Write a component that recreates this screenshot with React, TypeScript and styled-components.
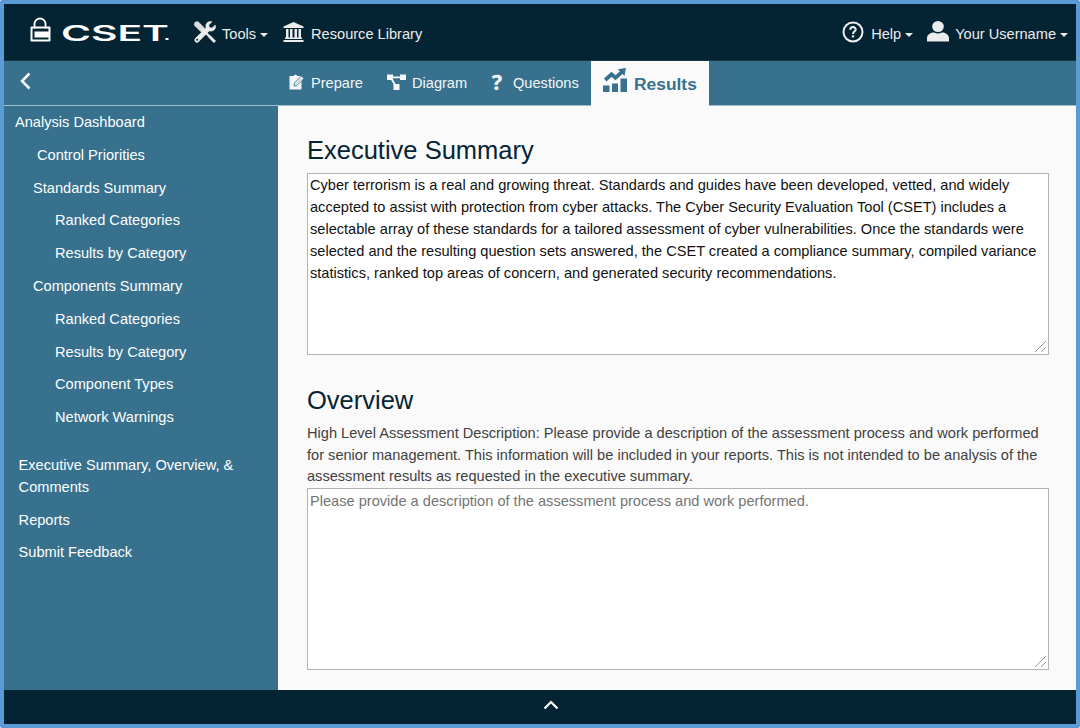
import React from 'react';
import styled, { createGlobalStyle } from 'styled-components';

const Global = createGlobalStyle`
  * { box-sizing: border-box; }
  body {
    margin: 0;
    background: #fff;
    font: 14.6px/21.93px "Liberation Sans", Arial, sans-serif;
    color: #414141;
  }
`;

const Frame = styled.div`
  display: flex;
  flex-direction: column;
  width: 1080px;
  height: 728px;
  border: 4px solid #5b9bd5;
  border-radius: 2px;
  background: #fafafa;
  overflow: hidden;
`;

const TopBar = styled.header`
  display: flex;
  align-items: center;
  height: 57px;
  flex: none;
  padding: 0 8px 0 26px;
  background: #042434;
  border-bottom: 1px solid #16384b;
  color: #ececec;
`;

const Logo = styled.svg`
  width: 146px;
  height: 36px;
  margin: -4px 18px 0 0;
`;

const MenuItem = styled.a<{ $gap: number; $after?: number }>`
  display: flex;
  align-items: center;
  white-space: nowrap;
  gap: ${p => p.$gap}px;
  margin-right: ${p => p.$after ?? 0}px;
  padding-top: 5px;
  svg { margin-top: -6px; flex: none; }
`;

const MenuLabel = styled.span`
  display: flex;
  align-items: center;
  gap: 4px;
`;

const Caret = styled.i`
  border: 4.5px solid transparent;
  border-top-color: currentColor;
  border-bottom: 0;
`;

const Spacer = styled.div`
  flex: 1;
`;

const NavBar = styled.nav`
  display: flex;
  height: 45px;
  flex: none;
  background: #37718e;
  border-bottom: 1px solid #9fbfcf;
  color: #f4f7f9;
`;

const BackButton = styled.div`
  width: 275px;
  padding: 11px 0 0 15px;
`;

const Tab = styled.a<{ $width: number; $active?: boolean }>`
  display: flex;
  align-items: center;
  width: ${p => p.$width}px;
  height: ${p => (p.$active ? 45 : 44)}px;
  padding: ${p => (p.$active ? '2px 0 0 12px' : '1px 0 0 10px')};
  gap: 6px;
  background: ${p => (p.$active ? '#fafafa' : 'transparent')};
  color: ${p => (p.$active ? '#37718e' : 'inherit')};
  font-size: ${p => (p.$active ? '17.4px' : 'inherit')};
  font-weight: ${p => (p.$active ? 700 : 400)};
  svg { flex: none; margin-top: ${p => (p.$active ? -8 : -3)}px; }
`;

const QuestionMark = styled.b`
  width: 15px;
  margin: -4px 0 0 -1px;
  font: bold 21px/20px "Open Sans", sans-serif;
  -webkit-text-stroke: .4px currentColor;
`;

const Body = styled.div`
  display: flex;
  flex: 1;
  min-height: 0;
`;

const Sidebar = styled.aside`
  width: 274px;
  flex: none;
  padding-top: .7px;
  background: #37718e;
  color: #fff;
`;

const SideLink = styled.a<{ $indent: number; $apart?: boolean }>`
  display: block;
  padding: 5.43px 40px 5.43px ${p => p.$indent}px;
  margin-top: ${p => (p.$apart ? 14.9 : 0)}px;
`;

const Content = styled.main`
  flex: 1;
  padding: 29px 27px 0 29px;
`;

const Heading = styled.h3<{ $gap: number }>`
  margin: 0 0 ${p => p.$gap}px;
  font-size: 25.5px;
  line-height: 31px;
  font-weight: 400;
  color: #042434;
`;

const Note = styled.p`
  margin: 0;
  white-space: nowrap;
`;

const TextBox = styled.textarea`
  display: block;
  width: 742px;
  height: 182px;
  margin: 0;
  padding: 1.4px 2px 2px;
  border: 1px solid #b3b3b3;
  border-radius: 0;
  background: #fff;
  font: inherit;
  color: #111;
  outline: none;
  &::placeholder { color: #757575; }
  &::-webkit-resizer {
    background: linear-gradient(135deg, transparent 55%, #999 56%, #999 60%, transparent 61%, transparent 78%, #999 79%, #999 83%, transparent 84%) 0 0 / 13px 13px no-repeat;
  }
`;

const Section = styled.section<{ $top?: number }>`
  margin-top: ${p => p.$top ?? 0}px;
`;

const Footer = styled.footer`
  display: flex;
  height: 34px;
  flex: none;
  justify-content: center;
  padding: 10px 0 0 22px;
  background: #042434;
`;

const links: { text: string; indent: number; apart?: boolean }[] = [
  { text: 'Analysis Dashboard', indent: 11 },
  { text: 'Control Priorities', indent: 33 },
  { text: 'Standards Summary', indent: 29 },
  { text: 'Ranked Categories', indent: 51 },
  { text: 'Results by Category', indent: 51 },
  { text: 'Components Summary', indent: 29 },
  { text: 'Ranked Categories', indent: 51 },
  { text: 'Results by Category', indent: 51 },
  { text: 'Component Types', indent: 51 },
  { text: 'Network Warnings', indent: 51 },
  { text: 'Executive Summary, Overview, & Comments', indent: 14.6, apart: true },
  { text: 'Reports', indent: 14.6 },
  { text: 'Submit Feedback', indent: 14.6 },
];

const summary =
  'Cyber terrorism is a real and growing threat. Standards and guides have been developed, vetted, and widely accepted to assist with protection from cyber attacks. The Cyber Security Evaluation Tool (CSET) includes a selectable array of these standards for a tailored assessment of cyber vulnerabilities. Once the standards were selected and the resulting question sets answered, the CSET created a compliance summary, compiled variance statistics, ranked top areas of concern, and generated security recommendations.';

const ToolsIcon = () => (
  <svg width="22" height="22" viewBox="0 0 22 22" fill="none" stroke="#ececec">
    <path d="M3 3.200 8 8.200" strokeWidth="5.600" strokeLinecap="round" stroke="#dcdcdc" />
    <path d="M8 8 17 17" strokeWidth="2.400" />
    <path d="M15.500 15.500 21 21" strokeWidth="3" />
    <path d="M3 19 14 8" strokeWidth="5" strokeLinecap="round" />
    <path d="M21.300 4 18 7 15.200 6.500 14.800 3.900 18 .8C14 -.4 11 2.600 12 6.500L15.500 10C19.500 10.800 22.500 8 21.300 4Z" fill="#ececec" strokeWidth=".5" />
    <circle cx="3.200" cy="18.800" r="1" fill="#042434" stroke="none" />
  </svg>
);

const LibraryIcon = () => (
  <svg width="21" height="20" viewBox="0 0 21 20" fill="#ececec">
    <path d="M10.500 0 20.500 4.500V6H.5V4.500Z" />
    <path d="M3 7H5.500V16H3ZM7 7H9.500V16H7ZM11.500 7H14V16H11.500ZM15.500 7H18V16H15.500Z" />
    <path d="M2 15.500H19V17H2ZM.5 18H20.500V20H.5Z" />
  </svg>
);

const HelpIcon = () => (
  <svg width="22" height="22" viewBox="0 0 22 22" fill="none" stroke="#f0f0f0">
    <circle cx="11" cy="11" r="9.500" strokeWidth="2" />
    <path d="M8.300 8.800C8.300 5.100 13.700 5.300 13.700 8.500 13.700 10.700 11 10.500 11 13" strokeWidth="2" />
    <path d="M11 14.300V16.400" strokeWidth="2.200" />
  </svg>
);

const UserIcon = () => (
  <svg width="22" height="21" viewBox="0 0 22 21" fill="#ececec">
    <ellipse cx="11" cy="5.500" rx="5.800" ry="5.500" />
    <path d="M0 20.500V17C0 13.500 4 11.500 7 11.500Q11 13.500 15 11.500C18 11.500 22 13.500 22 17V20.500Z" />
  </svg>
);

const PrepareIcon = () => (
  <svg width="16" height="16" viewBox="0 0 16 16">
    <path d="M.5 2H4.500Q6.500-1 8.500 2H12.500V15.500H.5Z" fill="#f4f7f9" />
    <path d="M5 12 5.500 9 12.300 2 15 4.500 8 11.500Z" fill="#f4f7f9" stroke="#37718e" strokeWidth=".9" />
    <path d="M7 10 12.500 4.500" stroke="#37718e" strokeWidth=".4" />
  </svg>
);

const DiagramIcon = () => (
  <svg width="19" height="16" viewBox="0 0 19 16" fill="#f4f7f9">
    <path d="M0 0.500H6V6H0ZM13 0.500H19V6H13ZM6.500 10H12.500V16H6.500Z" />
    <path d="M5 3.300H14M4 4 8.500 11.500" stroke="#f4f7f9" strokeWidth="1.800" />
  </svg>
);

const ResultsIcon = () => (
  <svg width="25" height="25" viewBox="0 0 25 25" fill="#37718e">
    <path d="M0 17.500H6.500V24H0ZM9 15.500H15V24H9ZM17.500 10.500H24V24H17.500Z" />
    <path d="M2.200 12 8.500 6.300 12.500 9.800 19.500 3.300" fill="none" stroke="#37718e" strokeWidth="3.800" />
    <path d="M14.800 1.200 23 0 21.500 8Z" />
  </svg>
);

export default function App() {
  return (
    <>
      <Global />
      <Frame>
        <TopBar>
          <Logo viewBox="0 -4 146 36" fill="#fff">
            <path d="M4.500 11V6.500A5.500 5.500 0 0 1 15.500 6.500V11" transform="translate(0 1.500)" fill="none" stroke="#fff" strokeWidth="1.800" />
            <path fillRule="evenodd" d="M1.500 10.500H19.500Q20.500 10.500 20.500 11.500V24.500Q20.500 25.500 19.500 25.500H1.500Q.5 25.500 .5 24.500V11.500Q.5 10.500 1.500 10.500ZM2.500 12.500V23.500H18.500V21.500H4.500V15.500H18.500V12.500Z" />
            <text x="31" y="25" fontFamily="Inter, sans-serif" fontSize="21" fontWeight="600" textLength="108" lengthAdjust="spacingAndGlyphs">CSET</text>
            <rect x="135.500" y="22" width="3" height="2" />
          </Logo>
          <MenuItem $gap={6} $after={15}>
            <ToolsIcon />
            <MenuLabel>Tools <Caret /></MenuLabel>
          </MenuItem>
          <MenuItem $gap={7}>
            <LibraryIcon />
            <MenuLabel>Resource Library</MenuLabel>
          </MenuItem>
          <Spacer />
          <MenuItem $gap={7} $after={14}>
            <HelpIcon />
            <MenuLabel>Help <Caret /></MenuLabel>
          </MenuItem>
          <MenuItem $gap={6}>
            <UserIcon />
            <MenuLabel>Your Username <Caret /></MenuLabel>
          </MenuItem>
        </TopBar>
        <NavBar>
          <BackButton>
            <svg width="12" height="18" viewBox="0 0 12 18" fill="none" stroke="#fff" strokeWidth="2.500">
              <path d="M10.500 1.500 3 9 10.500 16.500" />
            </svg>
          </BackButton>
          <Tab $width={98}><PrepareIcon />Prepare</Tab>
          <Tab $width={106}><DiagramIcon />Diagram</Tab>
          <Tab $width={108}><QuestionMark>?</QuestionMark>Questions</Tab>
          <Tab $width={118} $active><ResultsIcon />Results</Tab>
        </NavBar>
        <Body>
          <Sidebar>
            {links.map((l, i) => (
              <SideLink key={i} $indent={l.indent} $apart={l.apart}>{l.text}</SideLink>
            ))}
          </Sidebar>
          <Content>
            <Section>
              <Heading $gap={7}>Executive Summary</Heading>
              <TextBox defaultValue={summary} spellCheck={false} />
            </Section>
            <Section $top={29.6}>
              <Heading $gap={7}>Overview</Heading>
              <Note>
                High Level Assessment Description: Please provide a description of the assessment process and work performed<br />
                for senior management. This information will be included in your reports. This is not intended to be analysis of the<br />
                assessment results as requested in the executive summary.
              </Note>
              <TextBox placeholder="Please provide a description of the assessment process and work performed." />
            </Section>
          </Content>
        </Body>
        <Footer>
          <svg width="16" height="10" viewBox="0 0 16 10" fill="none" stroke="#fff" strokeWidth="2.200">
            <path d="M1.500 8.500 8 2 14.500 8.500" />
          </svg>
        </Footer>
      </Frame>
    </>
  );
}
